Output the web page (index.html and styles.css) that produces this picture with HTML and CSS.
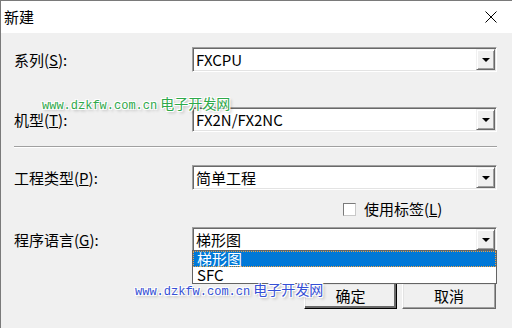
FILE: index.html
```html
<!DOCTYPE html>
<html lang="zh-CN">
<head>
    <meta charset="UTF-8">
    <title>新建</title>
    <link rel="stylesheet" href="styles.css">
</head>
<body>
    <div class="dialog">
        <div class="titlebar">
            <span class="title">新建</span>
            <svg class="close" width="12" height="12" viewBox="0 0 12 12">
                <path d="M0.5 0.5 L11.5 11.5 M11.5 0.5 L0.5 11.5" stroke="#000" stroke-width="1" fill="none"/>
            </svg>
        </div>

        <div class="body">
            <div class="field">
                <label>系列(<u>S</u>):</label>
                <div class="combo"><span class="value">FXCPU</span><span class="arrow"></span></div>
            </div>

            <div class="field model">
                <label>机型(<u>T</u>):</label>
                <div class="combo"><span class="value">FX2N/FX2NC</span><span class="arrow"></span></div>
            </div>

            <div class="sep"></div>

            <div class="field project">
                <label>工程类型(<u>P</u>):</label>
                <div class="combo"><span class="value">简单工程</span><span class="arrow"></span></div>
            </div>

            <div class="check-row">
                <span class="checkbox"></span>
                <span>使用标签(<u>L</u>)</span>
            </div>

            <div class="field lang">
                <label>程序语言(<u>G</u>):</label>
                <div class="combo">
                    <span class="value">梯形图</span><span class="arrow"></span>
                    <ul class="list">
                        <li class="selected">梯形图</li>
                        <li>SFC</li>
                    </ul>
                </div>
            </div>

            <div class="buttons">
                <button class="btn default">确定</button>
                <button class="btn">取消</button>
            </div>
        </div>

        <!-- watermarks over the dialog -->
        <div class="watermark green"><span class="url">www.dzkfw.com.cn</span> 电子开发网</div>
        <div class="watermark blue"><span class="url">www.dzkfw.com.cn</span> 电子开发网</div>
    </div>
</body>
</html>
```

FILE: styles.css
```css
body {
    margin: 0;
    font-family: "Noto Sans CJK SC", sans-serif;
    font-size: 15px;
    color: #000;
}
.dialog {
    position: relative;
    width: 511px;
    height: 327px;
    border-left: 1px solid #7a7a7a;
    border-top: 1px solid #7a7a7a;
    background: #f0f0f0;
    overflow: hidden;
}
.titlebar {
    height: 32px;
    background: #fff;
    display: flex;
    align-items: center;
    justify-content: space-between;
    padding: 0 15px 0 3px;
}
.title {
    line-height: 18px;
}
.body {
    padding: 14px 15px 0 13px;
}
.field {
    display: grid;
    grid-template-columns: 178px 1fr;
    align-items: center;
}
.field label {
    line-height: 15px;
}
.field.model {
    margin-top: 35px;
}
.field.project {
    margin-top: 17px;
}
.field.lang {
    margin-top: 11px;
}
.combo {
    position: relative;
    display: flex;
    height: 25px;
    box-sizing: border-box;
    background: #fff;
    border: 1px solid;
    border-color: #a0a0a0 #fff #fff #a0a0a0;
    box-shadow: inset 1px 1px #696969, inset -1px -1px #e3e3e3;
    padding: 1px;
}
.combo .value {
    flex: 1;
    padding-left: 2px;
    line-height: 21px;
}
.arrow {
    width: 19px;
    box-sizing: border-box;
    background: #f0f0f0;
    border: 1px solid;
    border-color: #f0f0f0 #696969 #696969 #f0f0f0;
    box-shadow: inset 1px 1px #fff, inset -1px -1px #a0a0a0;
    display: flex;
    align-items: center;
    justify-content: center;
}
.arrow::after {
    content: "";
    width: 0;
    height: 0;
    border-top: 4px solid #000;
    border-left: 4px solid transparent;
    border-right: 4px solid transparent;
}
.sep {
    margin-top: 14px;
    height: 0;
    border-top: 1px solid #a0a0a0;
    border-bottom: 1px solid #fff;
}
.check-row {
    display: flex;
    align-items: center;
    gap: 8px;
    margin-top: 12px;
    padding-left: 329px;
    height: 14px;
    line-height: 14px;
}
.checkbox {
    width: 13px;
    height: 13px;
    box-sizing: border-box;
    background: #fff;
    border: 1px solid;
    border-color: #7a7a7a #c8c8c8 #c8c8c8 #7a7a7a;
}
.list {
    position: absolute;
    top: calc(100% - 1px);
    left: -1px;
    right: -1px;
    margin: 0;
    padding: 0;
    list-style: none;
    background: #fff;
    border: 1px solid #646464;
    z-index: 2;
}
.list li {
    height: 16px;
    line-height: 16px;
    padding-left: 4px;
}
.list li.selected {
    background: #0078d7;
    color: #fff;
    outline: 1px dotted #f0a040;
    outline-offset: -1px;
}
.buttons {
    display: flex;
    justify-content: flex-end;
    gap: 5px;
    margin-top: 31px;
    padding-right: 1px;
}
.btn {
    width: 94px;
    height: 26px;
    box-sizing: border-box;
    font-family: inherit;
    font-size: 15px;
    line-height: 18px;
    padding: 0;
    color: #000;
    background: #f0f0f0;
    border: 1px solid;
    border-color: #fff #696969 #696969 #fff;
    box-shadow: inset -1px -1px #a0a0a0, inset 1px 1px #e3e3e3;
}
.btn.default {
    width: 93px;
    border-color: #fff #000 #000 #fff;
    box-shadow: inset -2px -2px #696969, inset 1px 1px #e3e3e3;
}
.watermark {
    position: absolute;
    line-height: 14px;
    font-size: 14px;
    white-space: nowrap;
    z-index: 3;
    text-shadow: 1px 1px 0 #fff, -1px -1px 0 #fff, 1px -1px 0 #fff, -1px 1px 0 #fff, 2px 2px 3px rgba(0, 0, 0, 0.3);
}
.watermark .url {
    font-family: "Liberation Mono", monospace;
    font-size: 12px;
}
.watermark.green {
    left: 41px;
    top: 95px;
    color: #2ea94a;
}
.watermark.blue {
    left: 134px;
    top: 281px;
    color: #3550d6;
}
```
